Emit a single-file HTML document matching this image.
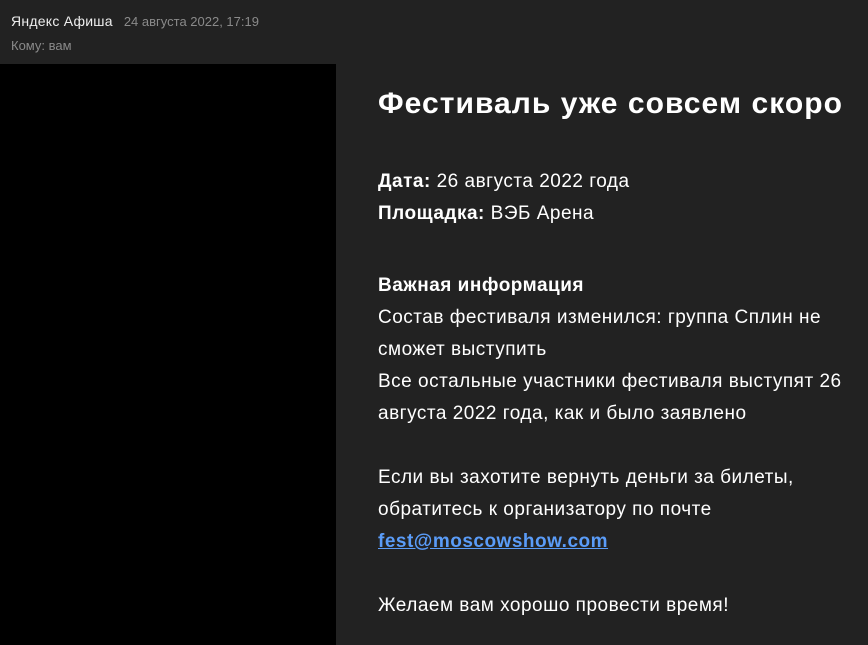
<!DOCTYPE html>
<html><head><meta charset="utf-8"><style>
html,body{margin:0;padding:0;background:#222;width:868px;height:645px;overflow:hidden;font-family:"Liberation Sans",Arial,sans-serif;}
.hdr{position:absolute;left:11px;top:13px;color:#eee;font-size:14px;letter-spacing:0.25px;white-space:nowrap;}
.hdr .d{color:#8a8a8a;font-size:13px;margin-left:11px;letter-spacing:0;}
.to{position:absolute;left:11px;top:38px;color:#8a8a8a;font-size:13px;}
.black{position:absolute;left:0;top:64px;width:336px;height:581px;background:#000;}
h1{position:absolute;left:378px;top:85px;margin:0;font-size:30px;letter-spacing:1.05px;line-height:38px;color:#fff;font-weight:bold;white-space:nowrap;}
.body{position:absolute;left:378px;top:166px;width:490px;color:#fff;font-size:19px;letter-spacing:0.5px;line-height:32px;white-space:nowrap;}
.sp{height:40px;}
a{color:#5a9cf8;font-weight:bold;text-decoration:underline;}
</style></head><body>
<div class="hdr">Яндекс Афиша<span class="d">24 августа 2022, 17:19</span></div>
<div class="to">Кому: вам</div>
<div class="black"></div>
<h1>Фестиваль уже совсем скоро</h1>
<div class="body">
<b>Дата:</b> 26 августа 2022 года<br>
<b>Площадка:</b> ВЭБ Арена
<div class="sp"></div>
<b>Важная информация</b><br>
Состав фестиваля изменился: группа Сплин не<br>сможет выступить<br>
Все остальные участники фестиваля выступят 26<br>августа 2022 года, как и было заявлено<br><br>
Если вы захотите вернуть деньги за билеты,<br>обратитесь к организатору по почте<br><a>fest@moscowshow.com</a><br><br>
Желаем вам хорошо провести время!
</div>
</body></html>
